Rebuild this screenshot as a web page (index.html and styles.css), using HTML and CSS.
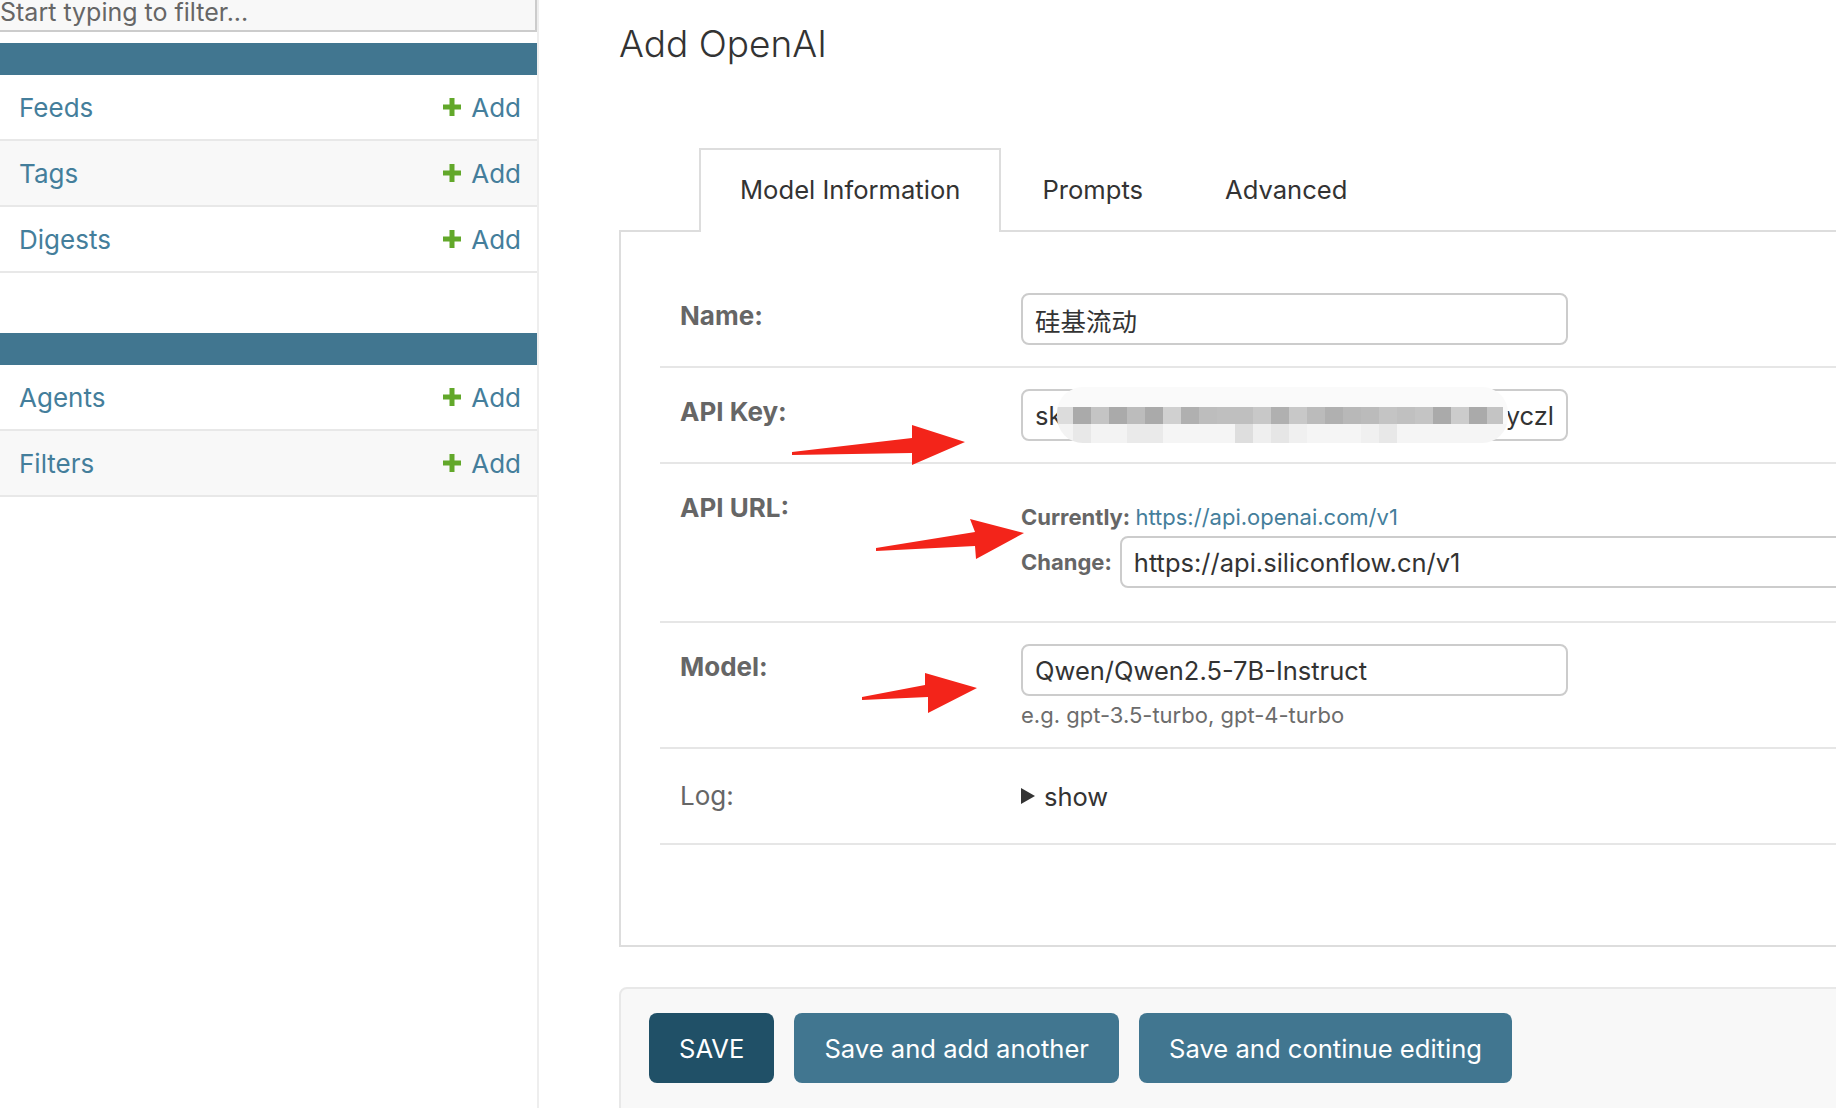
FILE: index.html
```html
<!DOCTYPE html>
<html>
<head>
    <title>Add OpenAI</title>
    <link rel="stylesheet" href="styles.css">
</head>
<body>
    <div class="page">
        <nav class="sidebar">
            <input type="text" class="nav-filter" placeholder="Start typing to filter...">
            <div class="module">
                <div class="caption"></div>
                <div class="model-row"><a href="#">Feeds</a><a href="#" class="addlink"><svg viewBox="0 0 20 20"><path d="M7.5 1h5v6.5H19v5h-6.5V19h-5v-6.5H1v-5h6.5z"/></svg>Add</a></div>
                <div class="model-row alt"><a href="#">Tags</a><a href="#" class="addlink"><svg viewBox="0 0 20 20"><path d="M7.5 1h5v6.5H19v5h-6.5V19h-5v-6.5H1v-5h6.5z"/></svg>Add</a></div>
                <div class="model-row"><a href="#">Digests</a><a href="#" class="addlink"><svg viewBox="0 0 20 20"><path d="M7.5 1h5v6.5H19v5h-6.5V19h-5v-6.5H1v-5h6.5z"/></svg>Add</a></div>
            </div>
            <div class="module">
                <div class="caption"></div>
                <div class="model-row"><a href="#">Agents</a><a href="#" class="addlink"><svg viewBox="0 0 20 20"><path d="M7.5 1h5v6.5H19v5h-6.5V19h-5v-6.5H1v-5h6.5z"/></svg>Add</a></div>
                <div class="model-row alt"><a href="#">Filters</a><a href="#" class="addlink"><svg viewBox="0 0 20 20"><path d="M7.5 1h5v6.5H19v5h-6.5V19h-5v-6.5H1v-5h6.5z"/></svg>Add</a></div>
            </div>
        </nav>

        <main class="content">
            <h1>Add OpenAI</h1>

            <ul class="tabs">
                <li class="active">Model Information</li>
                <li>Prompts</li>
                <li>Advanced</li>
            </ul>

            <fieldset class="panel">
                <div class="form-row">
                    <label>Name:</label>
                    <input type="text" class="vTextField" value="硅基流动">
                </div>
                <div class="form-row">
                    <label>API Key:</label>
                    <div class="vTextField masked">
                        <span>sk</span><span>yczl</span>
                        <div class="pixels"></div>
                    </div>
                </div>
                <div class="form-row">
                    <label>API URL:</label>
                    <div class="url-field">
                        <p class="currently">Currently: <a href="#">https://api.openai.com/v1</a></p>
                        <p class="change">Change: <input type="text" class="vTextField wide" value="https://api.siliconflow.cn/v1"></p>
                    </div>
                </div>
                <div class="form-row">
                    <label>Model:</label>
                    <div>
                        <input type="text" class="vTextField" value="Qwen/Qwen2.5-7B-Instruct">
                        <div class="help">e.g. gpt-3.5-turbo, gpt-4-turbo</div>
                    </div>
                </div>
                <div class="form-row">
                    <label class="plain">Log:</label>
                    <div class="log"><span class="arrow"></span>show</div>
                </div>
            </fieldset>

            <div class="submit-row">
                <button class="default">SAVE</button>
                <button>Save and add another</button>
                <button>Save and continue editing</button>
            </div>
        </main>

        <!-- annotation arrows drawn over the screenshot -->
        <svg class="marks" width="1836" height="1108">
            <polygon points="792,452 912,438 912,425 965,442 912,465 912,453 792,455"/>
            <polygon points="876,548 975,532 970,519 1024,533 976,559 975,546 876,551"/>
            <polygon points="862,697 925,685 925,673 977,688 928,713 928,697 862,700"/>
        </svg>
    </div>
</body>
</html>
```

FILE: styles.css
```css
body {
    margin: 0;
    font-family: Inter, "Noto Sans CJK SC", sans-serif;
    color: #333;
    background: #fff;
    overflow: hidden;
}

.page {
    position: relative;
    display: flex;
    width: 1836px;
    height: 1108px;
    overflow: hidden;
}

/* sidebar */

.sidebar {
    flex: 0 0 536px;
    border-right: 2px solid #eee;
}

.nav-filter {
    display: block;
    width: 537px;
    height: 39px;
    margin: -7px 0 0;
    padding: 0;
    font-family: Inter, sans-serif;
    font-size: 25px;
    color: #666;
    background: #f8f8f8;
    border: none;
    border-bottom: 2px solid #ccc;
    border-right: 2px solid #ccc;
    box-sizing: border-box;
}

.nav-filter::placeholder {
    color: #666;
}

.module {
    margin-top: 11px;
}

.module + .module {
    margin-top: 60px;
}

.caption {
    height: 32px;
    background-color: #417690;
}

.model-row {
    display: flex;
    justify-content: space-between;
    align-items: center;
    height: 64px;
    padding: 0 16px 0 19px;
    border-bottom: 2px solid #e8e8e8;
}

.model-row.alt {
    background-color: #f8f8f8;
}

.model-row a {
    color: #447e9b;
    font-size: 26px;
    text-decoration: none;
}

.addlink {
    display: flex;
    align-items: center;
}

.addlink svg {
    width: 20px;
    height: 20px;
    margin-right: 9px;
    fill: #62a82a;
}

/* main content */

.content {
    flex: 1;
    padding-left: 80px;
}

h1 {
    margin: 22px 0 0;
    font-size: 37px;
    line-height: 44px;
    font-weight: 300;
    color: #333;
}

.tabs {
    display: flex;
    list-style: none;
    margin: 82px 0 -2px 80px;
    padding: 0;
    position: relative;
    z-index: 1;
}

.tabs li {
    height: 80px;
    line-height: 80px;
    padding: 0 39px;
    font-size: 25.6px;
    color: #333;
    border: 2px solid transparent;
    border-bottom: none;
}

.tabs li.active {
    background: #fff;
    border-color: #ddd;
    padding-bottom: 2px;
}

.panel {
    width: 1400px;
    margin: 0;
    padding: 40px 0 100px 39px;
    border: 2px solid #ddd;
    box-sizing: border-box;
}

.form-row {
    display: flex;
    padding: 21px 20px;
    border-bottom: 2px solid #e6e6e6;
}

.form-row label {
    flex: 0 0 341px;
    padding-top: 8px;
    line-height: 30px;
    font-size: 26px;
    font-weight: bold;
    color: #666;
}

.form-row label.plain {
    font-weight: normal;
    padding-top: 11px;
}

.vTextField {
    display: block;
    width: 547px;
    height: 52px;
    margin: 0;
    padding: 0 12px;
    font-family: Inter, "Noto Sans CJK SC", sans-serif;
    font-size: 25.5px;
    color: #333;
    border: 2px solid #ccc;
    border-radius: 8px;
    box-sizing: border-box;
}

.masked {
    position: relative;
    display: flex;
    justify-content: space-between;
    align-items: center;
}

.pixels {
    position: absolute;
    left: 34px;
    top: -4px;
    width: 451px;
    height: 56px;
    border-radius: 26px;
    background-color: #fafafa;
    background-repeat: no-repeat;
    background-size: 451px 17px, 451px 19px;
    background-position: 0 20px, 0 37px;
    background-image:
        linear-gradient(90deg,
            #dcdcdc 0 16px, #aaa 16px 34px, #c4c4c4 34px 52px, #aaa 52px 70px,
            #bcbcbc 70px 88px, #aaa 88px 106px, #d0d0d0 106px 124px, #b0b0b0 124px 142px,
            #bdbdbd 142px 160px, #bfbfbf 160px 178px, #bfbfbf 178px 196px, #c8c8c8 196px 214px,
            #b0b0b0 214px 232px, #c8c8c8 232px 250px, #bbb 250px 268px, #b0b0b0 268px 286px,
            #b8b8b8 286px 304px, #bbb 304px 322px, #c4c4c4 322px 340px, #c0c0c0 340px 358px,
            #c4c4c4 358px 376px, #aaa 376px 394px, #ccc 394px 412px, #aaa 412px 430px,
            #c4c4c4 430px 446px, transparent 446px),
        linear-gradient(90deg,
            #f3f3f3 0 16px, #e8e8e8 16px 34px, #f3f3f3 34px 70px, #eaeaea 70px 106px,
            #f5f5f5 106px 178px, #dedede 178px 196px, #efefef 196px 214px, #e6e6e6 214px 232px,
            #f0f0f0 232px 250px, #f5f5f5 250px 304px, #f0f0f0 304px 322px, #e8e8e8 322px 340px,
            #f5f5f5 340px 451px);
}

.url-field {
    padding-top: 15px;
}

.url-field p {
    margin: 0;
    font-size: 22px;
    font-weight: bold;
    color: #666;
}

.currently {
    line-height: 34px;
}

.currently a {
    font-weight: normal;
    color: #447e9b;
    text-decoration: none;
}

.change {
    display: flex;
    align-items: center;
    gap: 8px;
    margin-top: 2px !important;
    margin-bottom: 12px !important;
}

.vTextField.wide {
    width: 800px;
}

.help {
    margin-top: 8px;
    line-height: 22px;
    font-size: 22px;
    color: #6c6c6c;
}

.log {
    display: flex;
    align-items: center;
    height: 52px;
    font-size: 25.5px;
    color: #333;
}

.arrow {
    width: 0;
    height: 0;
    margin-right: 9px;
    border-left: 14px solid #333;
    border-top: 8px solid transparent;
    border-bottom: 8px solid transparent;
}

/* buttons */

.submit-row {
    display: flex;
    gap: 20px;
    width: 1400px;
    margin-top: 40px;
    padding: 24px 28px 40px;
    background-color: #f8f8f8;
    border: 2px solid #e8e8e8;
    border-radius: 8px;
    box-sizing: border-box;
}

.submit-row button {
    height: 70px;
    padding: 0 30px;
    font-family: Inter, sans-serif;
    font-size: 25.6px;
    color: #fff;
    background-color: #417690;
    border: none;
    border-radius: 8px;
}

.submit-row button.default {
    background-color: #205067;
}

.marks {
    position: absolute;
    left: 0;
    top: 0;
    pointer-events: none;
}

.marks polygon {
    fill: #f3241a;
}
```
